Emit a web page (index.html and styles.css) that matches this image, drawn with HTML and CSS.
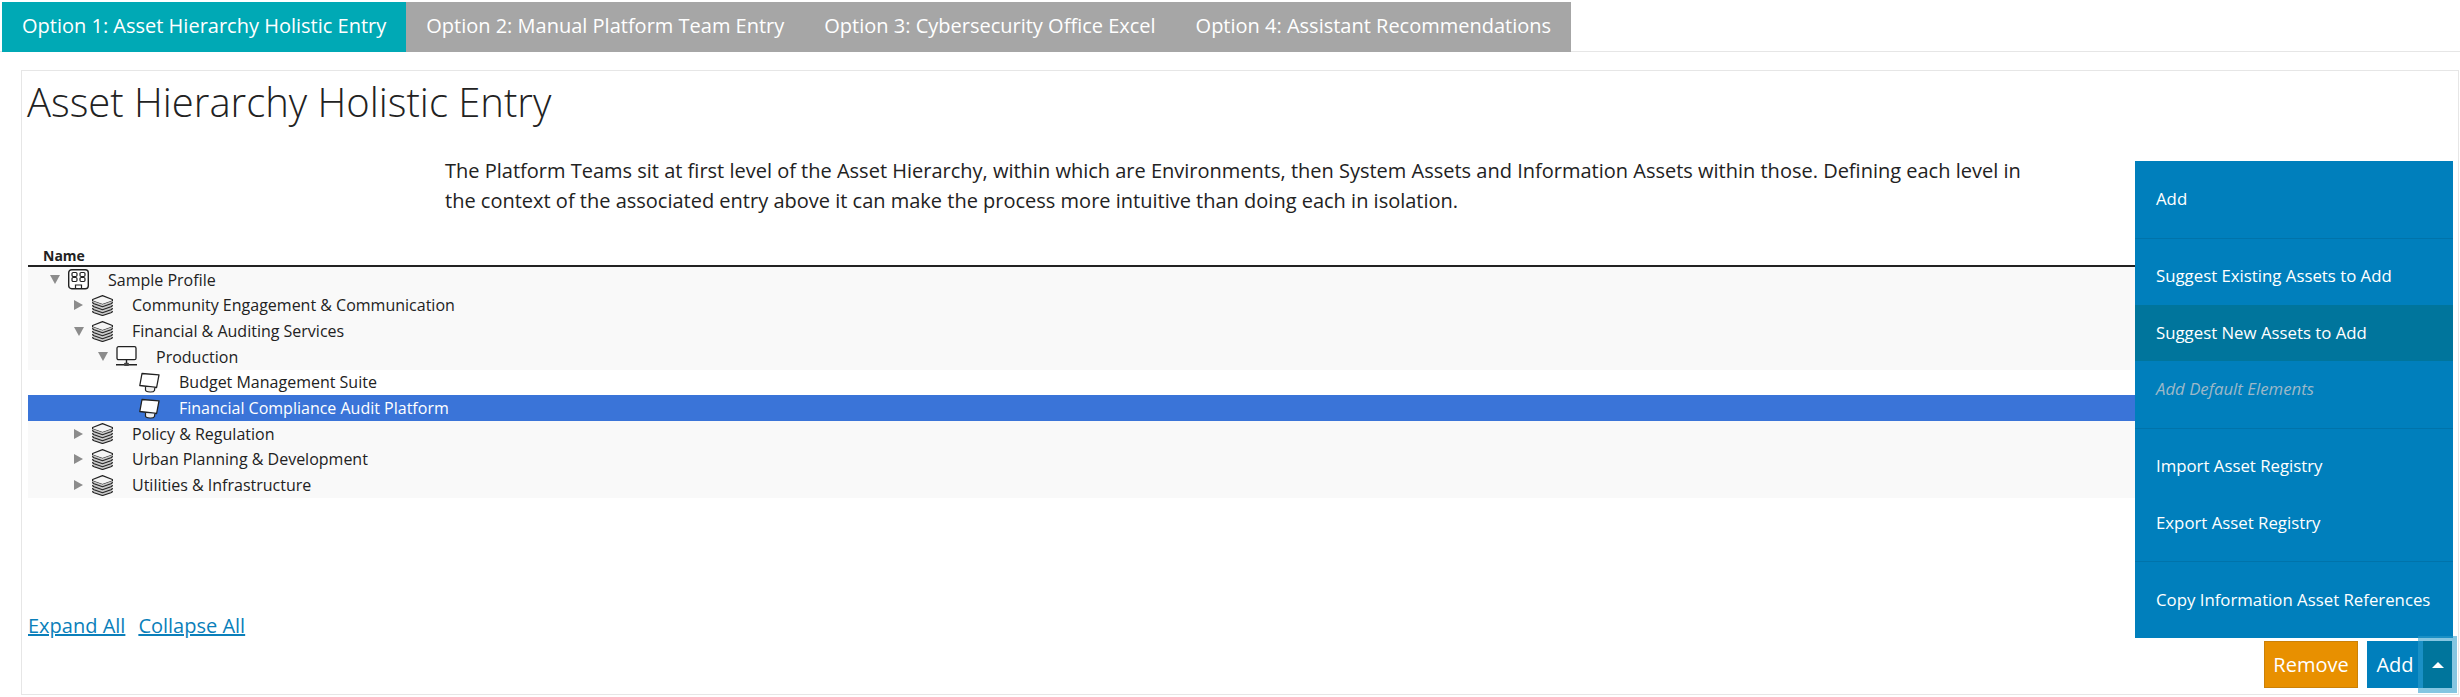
FILE: index.html
```html
<!DOCTYPE html>
<html lang="en">
<head>
    <meta charset="UTF-8">
    <title>Asset Hierarchy Holistic Entry</title>
    <link rel="stylesheet" href="styles.css">
</head>
<body>
    <svg class="icon-defs" width="0" height="0">
        <symbol id="icon-profile" viewBox="0 0 21 21">
            <rect x="0.700" y="0.700" width="19.600" height="19" rx="3" fill="#fff" stroke="#222" stroke-width="1.400"/>
            <rect x="4" y="3.500" width="5" height="4" rx="1.200" fill="none" stroke="#222" stroke-width="1.200"/>
            <rect x="12" y="3.500" width="5" height="4" rx="1.200" fill="none" stroke="#222" stroke-width="1.200"/>
            <rect x="4" y="8.500" width="5" height="4" rx="1.200" fill="none" stroke="#222" stroke-width="1.200"/>
            <rect x="12" y="8.500" width="5" height="4" rx="1.200" fill="none" stroke="#222" stroke-width="1.200"/>
            <path d="M7.500 19.500v-3.500h6v3.500" fill="none" stroke="#222" stroke-width="1.200"/>
        </symbol>
        <symbol id="icon-stack" viewBox="0 0 21 21">
            <path d="M0.600 4.500 10.500 0.600l9.900 3.900v1.500l-9.900 3.500-9.900-3.500z" fill="#f4f4f4" stroke="#222" stroke-width="1.200" stroke-linejoin="round"/>
            <path d="M0.600 6v11.500l9.900 3 9.900-3v-11.500l-9.900 3.500z" fill="#c9c9c9"/>
            <path d="M0.600 7c0 1 0.500 1.400 1.500 1.800l8.400 2.900 8.400-2.900c1-0.400 1.500-0.800 1.500-1.800" fill="none" stroke="#222" stroke-width="1.200"/>
            <path d="M0.600 10c0 1 0.500 1.400 1.500 1.800l8.400 2.900 8.400-2.900c1-0.400 1.500-0.800 1.500-1.800" fill="none" stroke="#222" stroke-width="1.200"/>
            <path d="M0.600 13c0 1 0.500 1.400 1.500 1.800l8.400 2.900 8.400-2.900c1-0.400 1.500-0.800 1.500-1.800" fill="none" stroke="#222" stroke-width="1.200"/>
            <path d="M0.600 16c0 1 0.500 1.400 1.500 1.800l8.400 2.700 8.400-2.700c1-0.400 1.500-0.800 1.500-1.800" fill="none" stroke="#222" stroke-width="1.200"/>
        </symbol>
        <symbol id="icon-network" viewBox="0 0 21 21">
            <rect x="1" y="0.700" width="19" height="13" rx="1.500" fill="#fff" stroke="#222" stroke-width="1.300"/>
            <path d="M10.500 13.700v3.500M0 18.800h21" stroke="#222" stroke-width="1.400"/>
            <rect x="8" y="16.800" width="5" height="3.200" rx="1" fill="#444"/>
        </symbol>
        <symbol id="icon-system" viewBox="0 0 21 21">
            <path d="M3 1.500 20 2.800 17.600 15.500 0.800 13.500z" fill="#fff" stroke="#222" stroke-width="1.300" stroke-linejoin="round"/>
            <path d="M6.500 15v3c0 1 1.500 1.800 4.500 2 2.500 0.100 4-0.500 4.500-1.500l0.300-2.800" fill="#eee" stroke="#222" stroke-width="1.200"/>
        </symbol>
    </svg>

    <nav class="tabs">
        <a class="tab active">Option 1: Asset Hierarchy Holistic Entry</a>
        <a class="tab">Option 2: Manual Platform Team Entry</a>
        <a class="tab">Option 3: Cybersecurity Office Excel</a>
        <a class="tab">Option 4: Assistant Recommendations</a>
    </nav>

    <main class="panel">
        <h1>Asset Hierarchy Holistic Entry</h1>
        <p class="intro">The Platform Teams sit at first level of the Asset Hierarchy, within which are Environments, then System Assets and Information Assets within those. Defining each level in the context of the associated entry above it can make the process more intuitive than doing each in isolation.</p>

        <div class="tree">
            <div class="tree-head">Name</div>
            <div class="row level-0"><span class="caret open"></span><svg class="node-icon"><use href="#icon-profile"/></svg>Sample Profile</div>
            <div class="row level-1"><span class="caret closed"></span><svg class="node-icon"><use href="#icon-stack"/></svg>Community Engagement &amp; Communication</div>
            <div class="row level-1"><span class="caret open"></span><svg class="node-icon"><use href="#icon-stack"/></svg>Financial &amp; Auditing Services</div>
            <div class="row level-2"><span class="caret open"></span><svg class="node-icon"><use href="#icon-network"/></svg>Production</div>
            <div class="row level-3 plain"><span class="caret"></span><svg class="node-icon"><use href="#icon-system"/></svg>Budget Management Suite</div>
            <div class="row level-3 selected"><span class="caret"></span><svg class="node-icon"><use href="#icon-system"/></svg>Financial Compliance Audit Platform</div>
            <div class="row level-1"><span class="caret closed"></span><svg class="node-icon"><use href="#icon-stack"/></svg>Policy &amp; Regulation</div>
            <div class="row level-1"><span class="caret closed"></span><svg class="node-icon"><use href="#icon-stack"/></svg>Urban Planning &amp; Development</div>
            <div class="row level-1"><span class="caret closed"></span><svg class="node-icon"><use href="#icon-stack"/></svg>Utilities &amp; Infrastructure</div>
        </div>

        <div class="tree-links">
            <a href="#">Expand All</a>
            <a href="#">Collapse All</a>
        </div>

        <div class="actions">
            <button class="btn btn-remove">Remove</button>
            <div class="split">
                <ul class="menu">
                    <li>Add</li>
                    <li class="divider"></li>
                    <li>Suggest Existing Assets to Add</li>
                    <li class="hover">Suggest New Assets to Add</li>
                    <li class="disabled">Add Default Elements</li>
                    <li class="divider"></li>
                    <li>Import Asset Registry</li>
                    <li>Export Asset Registry</li>
                    <li class="divider"></li>
                    <li>Copy Information Asset References</li>
                </ul>
                <button class="btn btn-add">Add</button>
                <button class="btn btn-toggle"><span class="caret-up"></span></button>
            </div>
        </div>
    </main>
</body>
</html>
```

FILE: styles.css
```css
body {
    font-family: "Open Sans", sans-serif;
    margin: 0;
    background: #fff;
    color: #222;
    overflow: hidden;
}

.icon-defs {
    display: block;
    height: 0;
}

.tabs {
    display: flex;
    height: 49px;
    margin-top: 2px;
    padding-left: 2px;
    border-bottom: 1px solid #e6e6e6;
}

.tab {
    height: 50px;
    line-height: 48px;
    padding: 0 20px;
    font-size: 20px;
    color: #fff;
    background: #a6a6a6;
}

.tab.active {
    background: #00a9b5;
}

.panel {
    display: flex;
    flex-direction: column;
    height: 623px;
    margin: 18px 1px 0 21px;
    padding: 0 6px;
    border: 1px solid #e6e6e6;
}

h1 {
    margin: 11px 0 0 -1px;
    font-size: 40px;
    font-weight: 300;
    line-height: 40px;
    color: #222;
}

.intro {
    width: 1590px;
    margin: 34px 0 0 417px;
    font-size: 20px;
    line-height: 30px;
    color: #222;
}

.tree {
    margin-top: 32px;
}

.tree-head {
    height: 17px;
    padding-left: 15px;
    font-size: 14px;
    font-weight: 700;
    line-height: 15px;
    border-bottom: 2px solid #222;
}

.row {
    display: flex;
    align-items: center;
    height: 25.67px;
    font-size: 16px;
    background: #f9f9f9;
}

.row.plain {
    background: #fff;
}

.row.selected {
    background: #3a74d8;
    color: #fff;
}

.level-0 { padding-left: 22px; }
.level-1 { padding-left: 46px; }
.level-2 { padding-left: 70px; }
.level-3 { padding-left: 93px; }

.caret {
    flex: none;
    width: 9px;
    margin-right: 9px;
}

.caret.open {
    height: 0;
    width: 0;
    border-top: 9px solid #8c8c8c;
    border-left: 5px solid transparent;
    border-right: 5px solid transparent;
    margin-right: 8px;
}

.caret.closed {
    height: 0;
    width: 0;
    border-left: 9px solid #8c8c8c;
    border-top: 5px solid transparent;
    border-bottom: 5px solid transparent;
}

.node-icon {
    flex: none;
    width: 21px;
    height: 21px;
    margin-right: 19px;
}

.tree-links {
    display: flex;
    gap: 13px;
    margin-top: 115px;
    font-size: 20px;
    line-height: 25px;
}

.tree-links a {
    color: #0a7fba;
}

.actions {
    display: flex;
    justify-content: flex-end;
    gap: 9px;
    margin-top: auto;
    margin-bottom: 6px;
}

.split {
    position: relative;
    display: flex;
}

.btn {
    height: 47px;
    margin: 0;
    padding: 0;
    font-family: inherit;
    font-size: 20px;
    color: #fff;
    border: 0;
}

.btn-remove {
    width: 94px;
    background: #e89000;
    border: 1px solid #cb8108;
}

.btn-add {
    width: 56px;
    background: #007fbc;
}

.btn-toggle {
    position: relative;
    z-index: 3;
    display: flex;
    align-items: center;
    justify-content: center;
    width: 29px;
    background: #00759c;
    box-shadow: 0 0 0 5px rgba(45, 156, 204, 0.58);
}

.caret-up {
    width: 0;
    height: 0;
    border-left: 6px solid transparent;
    border-right: 6px solid transparent;
    border-bottom: 6px solid #fff;
}

.menu {
    position: absolute;
    right: -1px;
    bottom: 100%;
    z-index: 2;
    width: 318px;
    margin: 0 0 3px;
    padding: 10px 0;
    list-style: none;
    background: #007fbc;
    box-sizing: border-box;
}

.menu li {
    height: 56.5px;
    padding-left: 21px;
    font-size: 16.8px;
    line-height: 56.5px;
    color: #fff;
}

.menu li.hover {
    background: #00759c;
}

.menu li.disabled {
    font-style: italic;
    color: #9db8c8;
}

.menu li.divider {
    height: 1px;
    margin: 10px 0 9.5px;
    padding: 0;
    background: #0073aa;
}
```
